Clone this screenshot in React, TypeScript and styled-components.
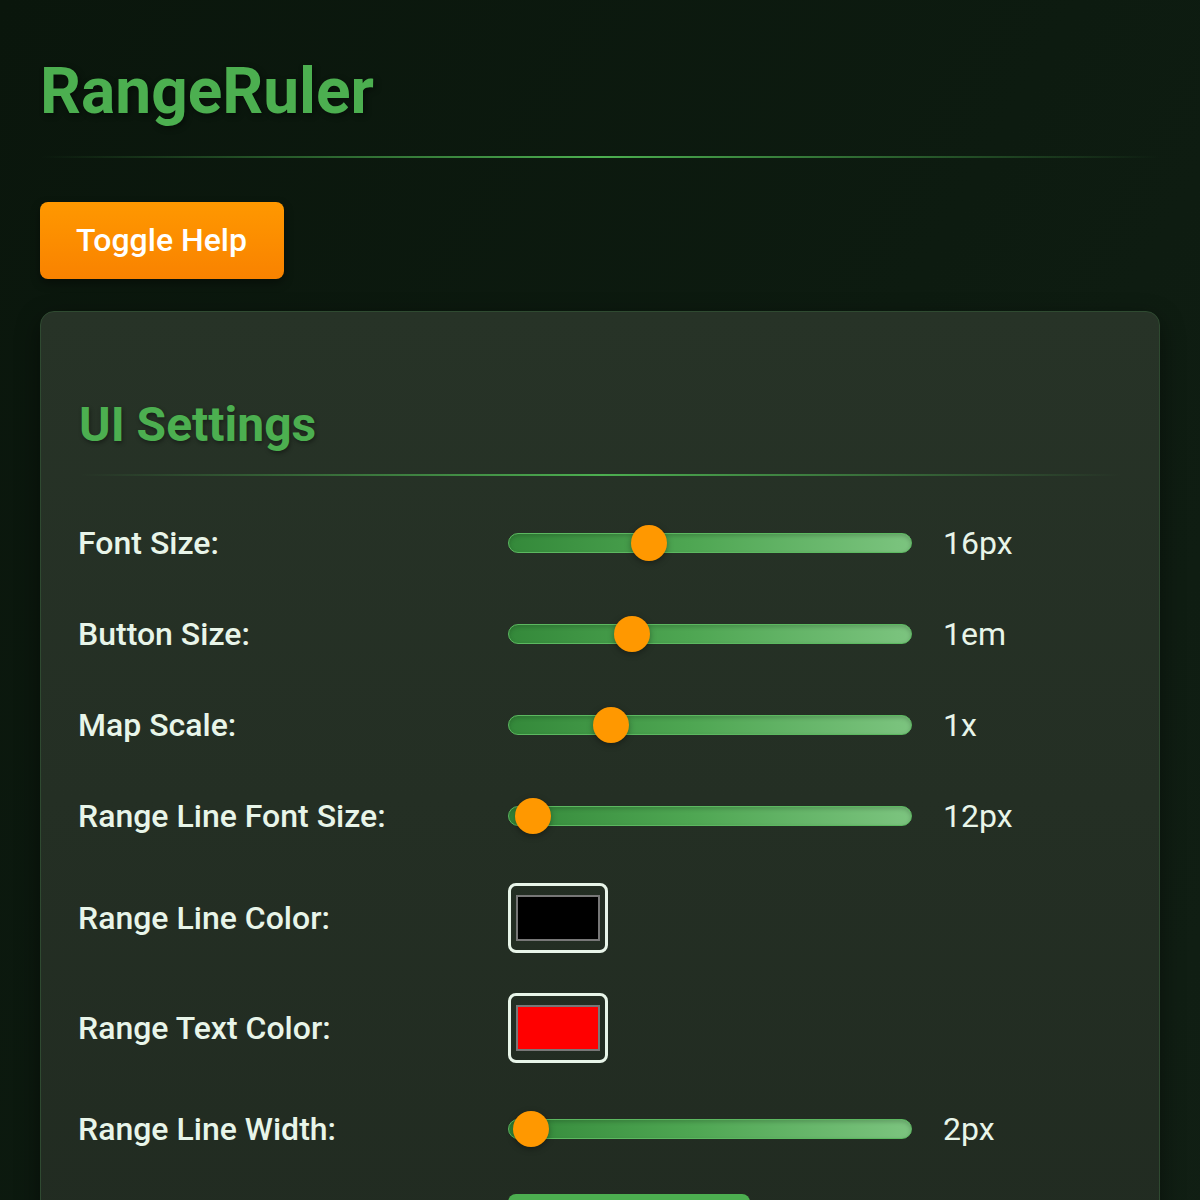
import styled, { createGlobalStyle } from 'styled-components';

const GlobalStyle = createGlobalStyle`
    html, body {
        margin: 0;
        padding: 0;
        min-height: 100%;
        background: linear-gradient(120deg, #0a160c 0%, #0d1b10 55%, #111f14 100%);
        font-family: Roboto, 'Liberation Sans', sans-serif;
    }
    * {
        box-sizing: border-box;
    }
`;

const Page = styled.div`
    width: 1200px;
    min-height: 1200px;
    padding: 0 40px 40px;
`;

const Title = styled.h1`
    margin: 14px 0 0;
    padding-top: 40px;
    font-size: 64px;
    font-weight: 700;
    line-height: 75px;
    color: #4caf50;
    text-shadow: 2px 2px 6px rgba(0, 0, 0, 0.45);
`;

const Divider = styled.div<{ $top: number; $bottom: number }>`
    height: 2px;
    margin: ${(p) => p.$top}px 0 ${(p) => p.$bottom}px;
    background: linear-gradient(90deg, rgba(76, 175, 80, 0) 0%, #4caf50 50%, rgba(76, 175, 80, 0) 100%);
`;

const ToggleButton = styled.button`
    display: block;
    padding: 20px 37px 20px 36px;
    border: none;
    border-radius: 8px;
    background: linear-gradient(180deg, #ff9800 0%, #f98200 100%);
    color: #fff;
    font-family: Roboto, 'Liberation Sans', sans-serif;
    font-size: 32px;
    font-weight: 500;
    line-height: 37px;
    box-shadow: 0 4px 10px rgba(0, 0, 0, 0.4);
    cursor: pointer;
`;

const Panel = styled.section`
    margin-top: 32px;
    padding: 40px 38px 40px;
    border: 1px solid #2f4a31;
    border-radius: 14px;
    background: linear-gradient(180deg, #273327 0%, #212b21 100%);
    box-shadow: 0 8px 24px rgba(0, 0, 0, 0.45);
`;

const PanelTitle = styled.h2`
    margin: 45px 0 0;
    font-size: 48px;
    font-weight: 700;
    line-height: 56px;
    color: #4caf50;
    text-shadow: 1px 2px 4px rgba(0, 0, 0, 0.4);
`;

const Rows = styled.div`
    display: flex;
    flex-direction: column;
    gap: 40px;
`;

const Row = styled.div<{ $shift?: number }>`
    display: grid;
    grid-template-columns: 398px 404px auto;
    column-gap: 31px;
    align-items: center;
    min-height: 51px;
    margin-top: ${(p) => p.$shift ?? 0}px;
`;

const Label = styled.label`
    margin-left: -1px;
    font-size: 32px;
    font-weight: 500;
    color: #e8f5e9;
`;

const Value = styled.span`
    font-size: 32px;
    font-weight: 400;
    color: #e8f5e9;
`;

const Slider = styled.input.attrs({ type: 'range' })`
    -webkit-appearance: none;
    appearance: none;
    width: 404px;
    height: 20px;
    margin: 0;
    border: 1px solid #5cb860;
    border-radius: 10px;
    background: linear-gradient(90deg, #34893a 0%, #4ea652 45%, #7cc47f 100%);
    box-shadow: inset 0 2px 4px rgba(0, 0, 0, 0.18);
    outline: none;

    &::-webkit-slider-thumb {
        -webkit-appearance: none;
        appearance: none;
        width: 36px;
        height: 36px;
        border: none;
        border-radius: 50%;
        background: #ff9800;
        box-shadow: 0 2px 6px rgba(0, 0, 0, 0.35);
        cursor: pointer;
    }
`;

const ColorInput = styled.input.attrs({ type: 'color' })`
    width: 100px;
    height: 70px;
    padding: 0;
    border: 3px solid #e8f5e9;
    border-radius: 8px;
    background: transparent;
    cursor: pointer;

    &::-webkit-color-swatch-wrapper {
        padding: 9px 5px;
    }
    &::-webkit-color-swatch {
        border: 2px solid #777;
        border-radius: 0;
    }
`;

const ActionButton = styled.button`
    grid-column: 2;
    width: 242px;
    height: 52px;
    border: none;
    border-radius: 8px;
    background: #4caf50;
    cursor: pointer;
`;

interface ISlider {
    label: string;
    min: number;
    max: number;
    step: number;
    value: number;
    unit: string;
}

const sliders: ISlider[] = [
    { label: 'Font Size:', min: 8, max: 32, step: 1, value: 16, unit: 'px' },
    { label: 'Button Size:', min: 0.5, max: 2.25, step: 0.05, value: 1, unit: 'em' },
    { label: 'Map Scale:', min: 0.25, max: 3.5, step: 0.05, value: 1, unit: 'x' },
    { label: 'Range Line Font Size:', min: 10, max: 130, step: 1, value: 12, unit: 'px' },
];

function SliderRow({ label, min, max, step, value, unit }: ISlider) {
    return (
        <Row>
            <Label>{label}</Label>
            <Slider min={min} max={max} step={step} defaultValue={value} />
            <Value>
                {value}
                {unit}
            </Value>
        </Row>
    );
}

function App() {
    return (
        <>
            <GlobalStyle />
            <Page>
                <Title>RangeRuler</Title>
                <Divider $top={27} $bottom={44} />
                <ToggleButton>Toggle Help</ToggleButton>
                <Panel>
                    <PanelTitle>UI Settings</PanelTitle>
                    <Divider $top={21} $bottom={41} />
                    <Rows>
                        {sliders.map((s) => (
                            <SliderRow key={s.label} {...s} />
                        ))}
                        <Row $shift={2}>
                            <Label>Range Line Color:</Label>
                            <ColorInput defaultValue="#000000" />
                        </Row>
                        <Row>
                            <Label>Range Text Color:</Label>
                            <ColorInput defaultValue="#ff0000" />
                        </Row>
                        <SliderRow label="Range Line Width:" min={1} max={100} step={1} value={2} unit="px" />
                        <Row>
                            <ActionButton aria-label="Save Settings" />
                        </Row>
                    </Rows>
                </Panel>
            </Page>
        </>
    );
}

export default App;
